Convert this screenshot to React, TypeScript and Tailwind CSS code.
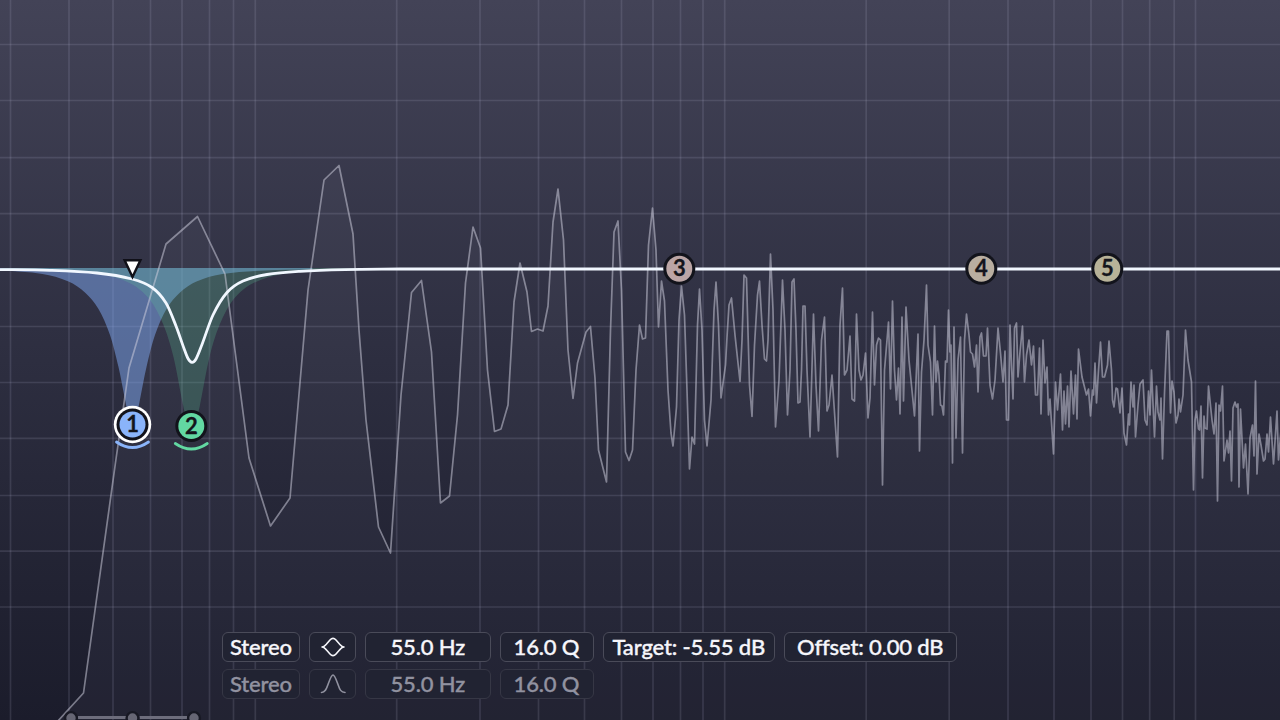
/*
  Equalizer view

  Frequency graph with the live spectrum, filter bands and
  the parameter strip of the selected band.
*/

import clsx from 'clsx';

type Point = [number, number];

const GRID_X = [
    10.5, 69, 113, 150.5, 182, 209.5, 233.5, 255.3, 396.7, 480, 538.5, 584.5, 621.5, 653, 680.5, 703, 724.7,
    866.2, 949.2, 1008, 1054, 1091, 1122.5, 1149.7, 1174.2, 1195.5,
];
const GRID_Y = [44.5, 100.5, 157.7, 213.7, 326.5, 382.5, 438.3, 495.5, 551.2, 607];

const SPECTRUM = `
    57,722 83.5,693 116,459 129,368 166,244 197.5,216.5 225,274 249,458 270.5,526 290,498 308,290 324,180
    339,165.5 353,234 359,330 366,420 378.5,527 390.5,553 401,395 411.5,292.5 421.5,280.5 431.5,352 440.5,503
    449.5,496 457.5,415 465.5,283 473,227 480.5,248 487.5,370 494.5,431.5 501,429 508,405 514,302 520,263
    527,292 531.5,331.5 537.5,329 543,331 548,306 553,222 558,189 563.5,240 568,350 573,398.5 577.5,363
    586,332 590.5,326.5 595,378 598.5,450 606.5,482 610.5,330 614,232 618,221 621.5,290 625.5,452 629,460.5
    632.5,450 636,370 639.5,325 642.5,339 645.5,338 648.5,245 652.5,208 656,250 658.5,327 661.5,281 664.5,301
    668,390 671,433 673,446 676.5,407 679,320 681.5,286 684.5,315 687,390 689.5,469 692,437 694.5,444
    697.5,325 699.5,289 702,330 704.5,420 707,446 711,400 714,310 716,282 718.5,325 721,398 725.5,365
    727,337 729,305 731.5,298 735,335 740,381.5 742,340 744,275 746.5,278 749.5,385 752,416.5 754.5,345
    757.5,295 759.5,281 762,325 764.5,359 766.5,361 768,340 770.5,254 773,310 775.5,427 779,380 782.5,280
    785,330 787.5,415 790,370 792,282 794,279 796,330 798,403 800,402 801.5,370 803,306 805,306 807,370
    810,437 813.5,314 816,385 818.5,431 821.5,340 824.5,317 827,411 829,405 832,375 837.5,457 840,325
    842.5,288 844.5,375 847,370 850,336 852,399 854.5,401 856.5,314 859,370 861,380 863,375 865.5,353
    868,418 870,398 872.5,312 874.5,385 876.5,345 878.5,338 880.5,340 882.5,485 884.5,370 888.5,322
    890.5,389 892.5,301 894.5,370 896.5,400 898.5,368 900,414 902,317 903.5,401 906,307 909,360 914.5,416
    918,334 919.5,451 921.5,372 924,340 926.5,285 928,345 930.5,362 932.5,415 934.5,326 936,382 937.5,361
    939,375 940.5,405 942,406 943.5,415 945.5,361 947,362 948.5,310 950,352 951,345 952.5,463 954,327
    956,438 958,360 960.5,337 962.5,453 964.5,340 966.5,314 969,335 970.5,352 972.5,354 974.5,367 976.5,345
    978,392 980,337 981.5,333 983.5,356 986,356 987.5,328 990,385 992.5,399 995,380 998,328 1000.5,353
    1003,382 1005,351 1006.5,420 1008.5,420 1010,325 1011.5,365 1013,399 1014.5,328 1016.5,323 1018,377
    1020,352 1022.5,326 1024.5,382 1026.5,355 1029,340 1031.5,365 1033.5,346 1035.5,395 1037.5,395
    1039.5,348 1041,414 1043,340 1045,383 1047,367 1048.5,415 1050,399 1053.5,454 1055.5,382 1057.5,410
    1060.5,374 1062.5,430 1064,391 1065.5,424 1067.5,386 1069,427 1071,371 1073.5,414 1075.5,375 1077,419
    1078.5,349 1082,377 1084.5,387 1086.5,395 1088.5,389 1090.5,416 1092.5,390 1093.5,395 1095,363
    1096.5,403 1098.5,370 1100.5,342 1102.5,377 1104.5,377 1107.5,365 1109,341 1111.5,370 1112.5,400
    1114,407 1116,388 1117.5,389 1120,413 1122,388 1124,433 1126.5,445 1128.5,414 1129.5,425 1131,382
    1133,407 1134,385 1135.5,437 1138,405 1140,384 1143,380 1145,420 1147,425 1148.5,391 1150,415
    1151.5,370 1154.5,437 1156.5,386 1158,412 1160,420 1161,398 1162.5,459 1164.5,393 1167,331 1168.5,331
    1170.5,413 1172,381 1174,392 1176,423 1178,415 1179,399 1180.5,412 1183,395 1185.5,330 1188,360
    1191.5,382 1193.5,490 1195,420 1196.5,411 1198.5,429 1199.5,430 1201,406 1202.5,478 1204,416 1205,428
    1207,429 1208.5,386 1212,420 1214,434 1216,403 1217.5,501 1219,405 1220.5,411 1222.5,386 1224,461
    1227,440 1228.5,453 1230,431 1231.5,481 1233,408 1235,402 1236.5,407 1238,404 1239,487 1240.5,409
    1243.5,468 1245.5,444 1248,494 1250,438 1252.5,425 1254,456 1255.5,381 1257,474 1259,434 1261,445
    1263.5,461 1265,459 1267,434 1268.5,452 1270.5,417 1273.5,464 1277,411 1278.5,460 1281,430
`;

// Half of a bell: distance from its centre, and y
const BLUE_BELL: Point[] = [
    [5, 412], [7, 402], [14, 367], [22.5, 335], [34, 309], [47, 293], [64, 281.5], [90, 274], [132, 270.5], [180, 269.5],
];
const GREEN_BELL: Point[] = [
    [5, 420], [8.5, 405], [18, 357], [28, 325], [41.5, 300], [61, 283.5], [91, 274], [130, 270.5], [190, 269],
];

const RESPONSE: Point[] = [
    [-4, 269.5], [50, 270.3], [97, 273], [132, 279], [152, 287.5], [166, 303], [176, 326], [184, 348.5], [188, 358.5], [192, 362.3],
    [196, 359], [202, 344.5], [213, 315], [227, 292.5], [243, 281], [267, 274.5], [300, 271.3], [345, 269.6], [400, 269],
];

// Catmull-Rom spline as cubic segments
const smooth = (pts: Point[]) =>
    pts.slice(1).reduce((d, p, i) => {
        const a = pts[Math.max(i - 1, 0)];
        const b = pts[i];
        const c = pts[Math.min(i + 2, pts.length - 1)];
        // tangents follow the segment's own length, so uneven spacing leaves no kinks
        const h = p[0] - b[0];
        const m0 = a === b ? (p[1] - b[1]) / h : (p[1] - a[1]) / (p[0] - a[0]);
        const m1 = c === p ? (p[1] - b[1]) / h : (c[1] - b[1]) / (c[0] - b[0]);
        return `${d} C${b[0] + h / 3},${b[1] + (m0 * h) / 3} ${p[0] - h / 3},${p[1] - (m1 * h) / 3} ${p[0]},${p[1]}`;
    }, `M${pts[0][0]},${pts[0][1]}`);

const bell = (cx: number, half: Point[]) => {
    const left = [...half].reverse().map(([d, y]): Point => [cx - d, y]);
    const right = half.map(([d, y]): Point => [cx + d, y]);
    return `${smooth(left)} ${smooth(right).replace('M', 'L')} L${cx + half[half.length - 1][0]},268 L${left[0][0]},268 Z`;
};

const BANDS = [
    { id: 1, x: 132.5, y: 424.5, color: '#8ab4fa', selected: true, arc: true },
    { id: 2, x: 191.3, y: 426, color: '#62d8a2', arc: true },
    { id: 3, x: 679.3, y: 268.7, color: '#bba5a5' },
    { id: 4, x: 981.3, y: 268.7, color: '#b9aea0' },
    { id: 5, x: 1107.3, y: 268.7, color: '#b7b298' },
];

const Graph = () => (
    <svg className="absolute inset-0" width="1280" height="720" viewBox="0 0 1280 720">
        {/* Spectrum fill */}
        <polygon points={`${SPECTRUM} 1281,722`} fill="#d8f0ff" fillOpacity="0.035" />

        {/* Grid */}
        <g stroke="#c8c8e6" strokeOpacity="0.14" strokeWidth="1.7">
            {GRID_X.map(x => <line key={x} x1={x} x2={x} y1="0" y2="720" />)}
            {GRID_Y.map(y => <line key={y} x1="0" x2="1280" y1={y} y2={y} />)}
        </g>

        {/* Band shapes */}
        <path d={bell(132.5, BLUE_BELL)} fill="#80aaf4" fillOpacity="0.5" />
        <path d={bell(191.5, GREEN_BELL)} fill="#5cc898" fillOpacity="0.24" />

        <polyline points={SPECTRUM} fill="none" stroke="#cdcddd" strokeOpacity="0.53" strokeWidth="1.7" strokeLinejoin="round" />

        {/* Response curve */}
        <path d={`${smooth(RESPONSE)} H1284`} fill="none" stroke="#f1f7ff" strokeWidth="2.8" />
        <path d="M124.6 260.3 H140.4 L132.5 277 Z" fill="#fff" stroke="#101018" strokeWidth="2.4" />

        {BANDS.map(b => (
            <g key={b.id} transform={`translate(${b.x} ${b.y})`}>
                {b.arc && (
                    <path d="M-16 17.5 Q0 28.5 16 17.5" fill="none" stroke={b.color} strokeWidth="2.8" strokeLinecap="round" />
                )}
                {b.selected && <circle r="18.7" fill="#fff" />}
                <circle r="16" fill="#12131b" />
                <circle r="13" fill={b.color} />
                <text
                    y="7.7"
                    textAnchor="middle"
                    fill="#14151c"
                    stroke="#14151c"
                    strokeWidth="0.3"
                    className="font-[Lato,sans-serif] text-[22px] font-bold"
                >
                    {b.id}
                </text>
            </g>
        ))}

        {/* Range slider */}
        <path d="M78 717.5 H126 M139.5 717.5 H187" stroke="#6d6d7c" strokeWidth="3" />
        {[71, 132.5, 194].map(x => (
            <circle key={x} cx={x} cy="718" r="5.9" fill="#666674" stroke="#181924" strokeWidth="2.4" />
        ))}
    </svg>
);

const Chip = ({ className, dim, children }: { className: string; dim?: boolean; children: React.ReactNode }) => (
    <div
        className={clsx(
            'flex h-[30px] items-center justify-center rounded-[6px] border bg-[#212332] whitespace-nowrap',
            dim ? 'border-[#363745] text-[#9192a0]' : 'border-[#4a4b59] text-[#f6f6fb]',
            className,
        )}
    >
        {children}
    </div>
);

const ShapeIcon = ({ d }: { d: string }) => (
    <svg width="26" height="22" viewBox="0 0 26 22" fill="none" stroke="currentColor" strokeWidth="1.6" strokeLinecap="round" strokeLinejoin="round">
        <path d={d} />
    </svg>
);

const DIAMOND = 'M2 11 C4.5 11 5 9.5 6.5 8 L10 4 C12 1.8 14 1.8 16 4 L19.5 8 C21 9.5 21.5 11 24 11 C21.5 11 21 12.5 19.5 14 L16 18 C14 20.2 12 20.2 10 18 L6.5 14 C5 12.5 4.5 11 2 11 Z';
const BELL = 'M1.5 19.5 C5 19.5 6.3 16.5 8 11.5 C9.7 7 11.3 2 13 2 C14.7 2 16.3 7 18 11.5 C19.7 16.5 21 19.5 25 19.5';

export default function App() {
    return (
        <main className="relative flex h-[720px] w-[1280px] flex-col justify-end overflow-hidden bg-linear-to-b from-[#434357] via-[#2d2e40] to-[#1b1c2b] font-[Lato,sans-serif]">
            <Graph />

            {/* Parameters of the selected band */}
            <div className="relative flex flex-col gap-[7px] pb-[21px] pl-[222px] text-[22px] leading-none font-medium tracking-[-0.15px] [-webkit-text-stroke:0.35px_currentColor]">
                <div className="flex gap-[9px]">
                    <Chip className="w-[78px]">Stereo</Chip>
                    <Chip className="w-[47px]"><ShapeIcon d={DIAMOND} /></Chip>
                    <Chip className="w-[125.5px]">55.0 Hz</Chip>
                    <Chip className="w-[94px]">16.0 Q</Chip>
                    <Chip className="w-[172.5px]">Target: -5.55 dB</Chip>
                    <Chip className="w-[172.5px]">Offset: 0.00 dB</Chip>
                </div>
                <div className="flex gap-[9px]">
                    <Chip dim className="w-[78px]">Stereo</Chip>
                    <Chip dim className="w-[47px]"><ShapeIcon d={BELL} /></Chip>
                    <Chip dim className="w-[125.5px]">55.0 Hz</Chip>
                    <Chip dim className="w-[94px]">16.0 Q</Chip>
                </div>
            </div>
        </main>
    );
}
